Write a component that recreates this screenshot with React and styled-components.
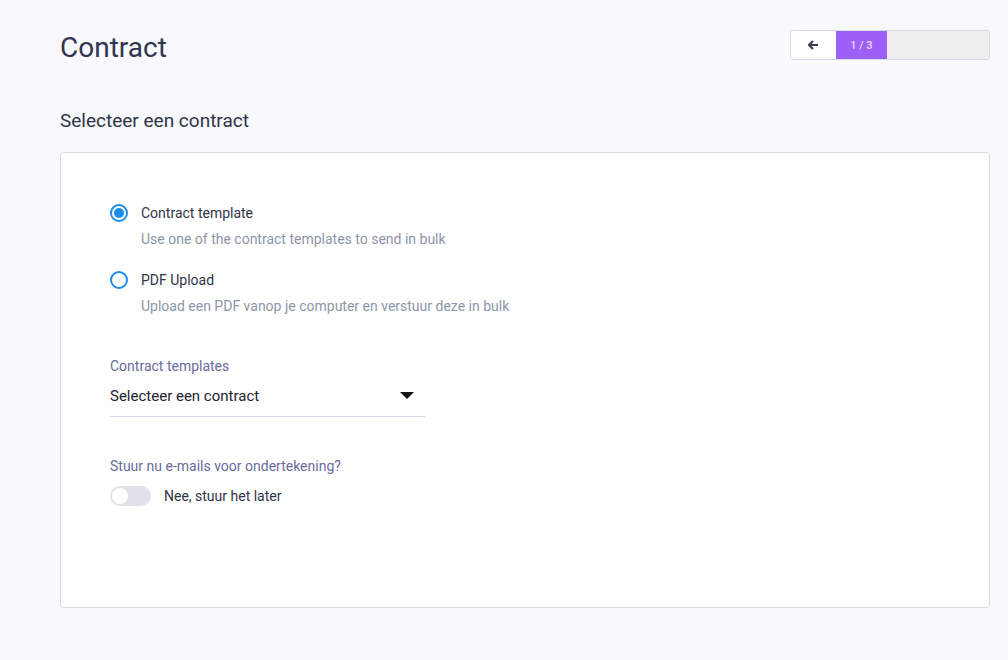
import styled, { createGlobalStyle } from 'styled-components';

const GlobalStyle = createGlobalStyle`
    body {
        margin: 0;
        background: #f8f8fd;
        font-family: Roboto, "Liberation Sans", sans-serif;
        color: #2f3447;
    }
`

const Page = styled.div`
    width: 1008px;
    height: 660px;
    padding: 30px 18px 0 60px;
    box-sizing: border-box;
`

const Header = styled.div`
    display: flex;
    justify-content: space-between;
    align-items: flex-start;
`

const Title = styled.h1`
    margin: 0;
    padding-top: 1px;
    font-size: 28px;
    font-weight: 400;
    color: #2f3650;
    line-height: 34px;
`

const Stepper = styled.div`
    display: flex;
    width: 200px;
    height: 30px;
    border: 1px solid #d5dbe6;
    border-radius: 3px;
    overflow: hidden;
    box-sizing: border-box;
`

const BackButton = styled.button`
    width: 45px;
    border: none;
    background: #fff;
    display: flex;
    align-items: center;
    justify-content: center;
    padding: 0;
`

const StepCount = styled.div`
    width: 51px;
    background: #9d5ff5;
    color: #e9dcfd;
    font-size: 11px;
    font-weight: 500;
    display: flex;
    align-items: center;
    justify-content: center;
`

const StepRest = styled.div`
    flex: 1;
    background: #eeeeee;
`

const SubTitle = styled.h2`
    margin: 45px 0 0;
    font-size: 19px;
    font-weight: 400;
    color: #2f3447;
    line-height: 22px;
`

const Card = styled.div`
    margin-top: 20px;
    height: 456px;
    box-sizing: border-box;
    background: #fff;
    border: 1px solid #d6dce6;
    border-radius: 4px;
    padding: 51px 49px 0;
`

const Option = styled.label`
    display: grid;
    grid-template-columns: 18px 1fr;
    column-gap: 13px;
    row-gap: 8px;
    margin-bottom: 23px;
`

const Radio = styled.span`
    width: 18px;
    height: 18px;
    box-sizing: border-box;
    border-radius: 50%;
    border: 2px solid #1b8bed;
    display: flex;
    align-items: center;
    justify-content: center;
    &::after {
        content: '';
        width: 10px;
        height: 10px;
        border-radius: 50%;
        background: #1b8bed;
        display: ${p => (p.$checked ? 'block' : 'none')};
    }
`

const OptionLabel = styled.span`
    font-size: 14px;
    line-height: 18px;
    color: #2f3447;
`

const OptionHint = styled.span`
    grid-column: 2;
    font-size: 14px;
    line-height: 18px;
    color: #8c96a8;
`

const FieldLabel = styled.div`
    font-size: 14px;
    line-height: 18px;
    color: #6a6b9c;
`

const Select = styled.div`
    width: 315px;
    height: 42px;
    box-sizing: border-box;
    border-bottom: 1px solid #d3d9e6;
    display: flex;
    align-items: center;
    justify-content: space-between;
    padding-right: 11px;
    font-size: 15px;
    color: #1f2330;
`

const Caret = styled.span`
    width: 0;
    height: 0;
    border-left: 7px solid transparent;
    border-right: 7px solid transparent;
    border-top: 7px solid #111;
`

const TemplatesField = styled.div`
    margin-top: 42px;
`

const EmailField = styled.div`
    margin-top: 40px;
`

const ToggleRow = styled.div`
    display: flex;
    align-items: center;
    gap: 13px;
    margin-top: 11px;
`

const Toggle = styled.span`
    width: 41px;
    height: 20px;
    border-radius: 10px;
    background: #dfe2e9;
    position: relative;
    &::after {
        content: '';
        position: absolute;
        top: 2px;
        left: 2px;
        width: 16px;
        height: 16px;
        border-radius: 50%;
        background: #fff;
    }
`

const ToggleLabel = styled.span`
    font-size: 14px;
    color: #2f3447;
`

function App() {
    return (
        <Page>
            <GlobalStyle />
            <Header>
                <Title>Contract</Title>
                <Stepper>
                    <BackButton>
                        <svg width="11" height="10" viewBox="0 0 11 10">
                            <path d="M5 1 L1 5 L5 9 M1 5 H10" stroke="#3a3f4f" strokeWidth="2.2" fill="none" />
                        </svg>
                    </BackButton>
                    <StepCount>1 / 3</StepCount>
                    <StepRest />
                </Stepper>
            </Header>
            <SubTitle>Selecteer een contract</SubTitle>
            <Card>
                <Option>
                    <Radio $checked />
                    <OptionLabel>Contract template</OptionLabel>
                    <OptionHint>Use one of the contract templates to send in bulk</OptionHint>
                </Option>
                <Option>
                    <Radio />
                    <OptionLabel>PDF Upload</OptionLabel>
                    <OptionHint>Upload een PDF vanop je computer en verstuur deze in bulk</OptionHint>
                </Option>
                <TemplatesField>
                    <FieldLabel>Contract templates</FieldLabel>
                    <Select>
                        Selecteer een contract
                        <Caret />
                    </Select>
                </TemplatesField>
                <EmailField>
                    <FieldLabel>Stuur nu e-mails voor ondertekening?</FieldLabel>
                    <ToggleRow>
                        <Toggle />
                        <ToggleLabel>Nee, stuur het later</ToggleLabel>
                    </ToggleRow>
                </EmailField>
            </Card>
        </Page>
    )
}

export default App;
